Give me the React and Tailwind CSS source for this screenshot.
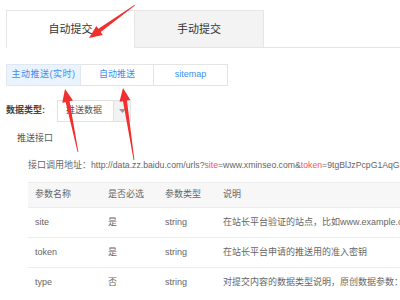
import React from "react";

const rows = [
  { name: "site", req: "是", type: "string", desc: "在站长平台验证的站点，比如www.example.com" },
  { name: "token", req: "是", type: "string", desc: "在站长平台申请的推送用的准入密钥" },
  { name: "type", req: "否", type: "string", desc: "对提交内容的数据类型说明，原创数据参数：original" },
];

const Arrow = ({ x1, y1, x2, y2 }) => {
  // tapered red arrow from tail (x1,y1) to tip (x2,y2)
  const dx = x2 - x1;
  const dy = y2 - y1;
  const len = Math.hypot(dx, dy);
  const ux = dx / len;
  const uy = dy / len;
  const nx = -uy;
  const ny = ux;
  const headLen = 13;
  const bx = x2 - ux * headLen;
  const by = y2 - uy * headLen;
  const pts = [
    [x1 + nx * 0.4, y1 + ny * 0.4],
    [bx + nx * 2, by + ny * 2],
    [bx + nx * 5.5, by + ny * 5.5],
    [x2, y2],
    [bx - nx * 5.5, by - ny * 5.5],
    [bx - nx * 2, by - ny * 2],
    [x1 - nx * 0.4, y1 - ny * 0.4],
  ];
  return <polygon points={pts.map((p) => p.join(",")).join(" ")} fill="#f0302e" />;
};

export default function App() {
  return (
    <div
      className="relative w-[400px] h-[300px] overflow-hidden bg-white text-[#333] whitespace-nowrap"
      style={{ fontFamily: '"Liberation Sans", "Noto Sans CJK SC", sans-serif' }}
    >
      <div className="pt-[10px] pl-[6px]">
        {/* Tabs */}
        <div className="flex">
          <div className="w-[129px] h-[38px] flex items-center justify-center border border-b-0 border-[#e6e6e6] text-[11px] text-[#333]">
            自动提交
          </div>
          <div className="flex-1 flex border-b border-[#e6e6e6]">
            <div className="w-[129px] h-[37px] flex items-center justify-center bg-[#f3f3f3] border-t border-r border-[#e6e6e6] text-[11px] text-[#333]">
              手动提交
            </div>
          </div>
        </div>

        {/* Sub tabs */}
        <div className="flex mt-[16px] text-[9px] text-[#3c8ef0]">
          <div className="w-[75px] h-[22px] flex items-center justify-center bg-[#e9f4ff] border border-[#dfe8f2] tracking-[0.5px]">
            主动推送(实时)
          </div>
          <div className="w-[73px] h-[22px] flex items-center justify-center border-y border-r border-[#e4e4e4]">
            自动推送
          </div>
          <div className="w-[74px] h-[22px] flex items-center justify-center border-y border-r border-[#e4e4e4]">
            sitemap
          </div>
        </div>

        {/* Data type */}
        <div className="flex items-center mt-[14px] text-[9px]">
          <span className="w-[51px] font-bold text-[#444]">数据类型:</span>
          <div className="flex h-[22px] border border-[#e2e2e2]">
            <div className="w-[55px] flex items-center pl-[8px] text-[#555]">推送数据</div>
            <div className="w-[17px] flex items-center justify-center bg-[#f2f2f2] border-l border-[#e2e2e2]">
              <svg width="7" height="4" viewBox="0 0 7 4">
                <polygon points="0,0 7,0 3.5,4" fill="#999" />
              </svg>
            </div>
          </div>
        </div>

        <div className="mt-[10px] pl-[11px] text-[9px] text-[#555]">推送接口</div>

        <div className="pl-[22px]">
          <div className="mt-[13px] text-[9px] text-[#666]">
            接口调用地址：
            <span className="text-[8.7px]">http://data.zz.baidu.com/urls?</span>
            <span className="text-[8.7px] text-[#f5525a]">site</span>
            <span className="text-[8.7px]">=www.xminseo.com&amp;</span>
            <span className="text-[8.7px] text-[#f5525a]">token</span>
            <span className="text-[8.7px]">=9tgBlJzPcpG1AqGH</span>
          </div>

          {/* Table */}
          <table className="mt-[10px] w-[420px] border-collapse text-[9px] text-[#666]">
            <thead>
              <tr className="h-[25px] bg-[#f7f7f7] border-t border-[#ececec]">
                <th className="w-[72px] pl-[7px] text-left font-normal">参数名称</th>
                <th className="w-[58px] pl-[8px] text-left font-normal">是否必选</th>
                <th className="w-[58px] pl-[7px] text-left font-normal">参数类型</th>
                <th className="pl-[7px] text-left font-normal">说明</th>
              </tr>
            </thead>
            <tbody>
              {rows.map((r) => (
                <tr key={r.name} className="h-[30px] border-t border-[#ececec]">
                  <td className="pl-[7px]">{r.name}</td>
                  <td className="pl-[8px]">{r.req}</td>
                  <td className="pl-[7px]">{r.type}</td>
                  <td className="pl-[7px]">{r.desc}</td>
                </tr>
              ))}
            </tbody>
          </table>
        </div>
      </div>

      <svg className="absolute inset-0 pointer-events-none" width="400" height="300">
        <Arrow x1={135} y1={5} x2={89} y2={38} />
        <Arrow x1={78} y1={152} x2={65} y2={89} />
        <Arrow x1={134} y1={160} x2={123} y2={88} />
      </svg>
    </div>
  );
}
